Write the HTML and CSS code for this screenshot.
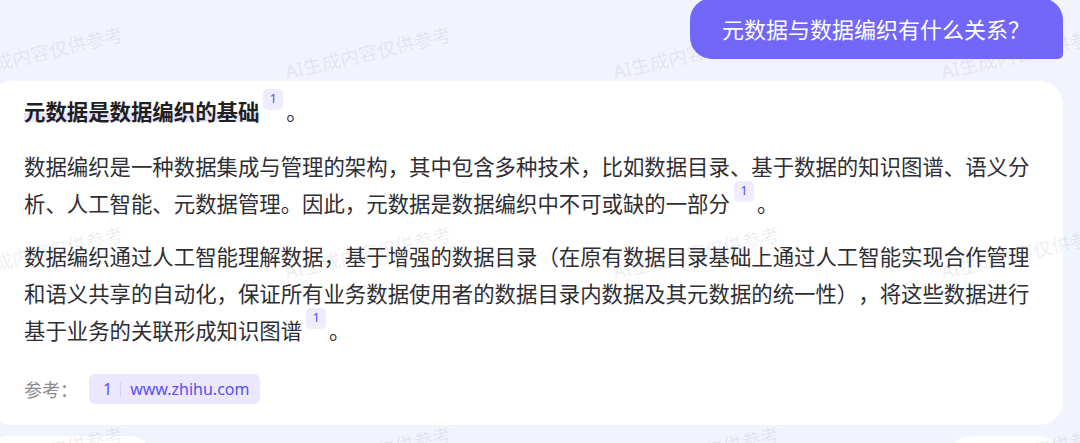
FILE: index.html
```html
<!DOCTYPE html>
<html lang="zh-CN">
<head>
    <meta charset="UTF-8">
    <meta name="viewport" content="width=device-width, initial-scale=1.0">
    <title>元数据与数据编织</title>
    <link rel="stylesheet" href="styles.css">
</head>
<body>
    <div class="page">
        <div class="chat">
            <div class="row-user">
                <div class="bubble-user">元数据与数据编织有什么关系？</div>
            </div>
            <div class="answer">
                <p class="answer-title"><strong class="mark">元数据是数据编织的基础</strong><sup class="cite">1</sup>。</p>
                <p>数据编织是一种数据集成与管理的架构，其中包含多种技术，比如数据目录、基于数据的知识图谱、语义分析、人工智能、元数据管理。因此，元数据是数据编织中不可或缺的一部分<sup class="cite">1</sup>。</p>
                <p>数据编织通过人工智能理解数据，基于增强的数据目录（在原有数据目录基础上通过人工智能实现合作管理和语义共享的自动化，保证所有业务数据使用者的数据目录内数据及其元数据的统一性），将这些数据进行基于业务的关联形成知识图谱<sup class="cite">1</sup>。</p>
                <div class="refs">
                    <span class="refs-label">参考：</span>
                    <a href="javascript:;" class="ref-chip"><span class="ref-num">1</span><span class="ref-sep"></span><span>www.zhihu.com</span></a>
                </div>
            </div>
            <div class="row-next">
                <div class="stub stub-left"></div>
                <div class="stub stub-right"></div>
            </div>
        </div>
        <!-- 水印 -->
        <div class="watermark">
            <div class="wm"><span>AI生成内容仅供参考</span></div>
            <div class="wm"><span>AI生成内容仅供参考</span></div>
            <div class="wm"><span>AI生成内容仅供参考</span></div>
            <div class="wm"><span>AI生成内容仅供参考</span></div>
            <div class="wm"><span>AI生成内容仅供参考</span></div>
            <div class="wm"><span>AI生成内容仅供参考</span></div>
            <div class="wm"><span>AI生成内容仅供参考</span></div>
            <div class="wm"><span>AI生成内容仅供参考</span></div>
            <div class="wm"><span>AI生成内容仅供参考</span></div>
            <div class="wm"><span>AI生成内容仅供参考</span></div>
            <div class="wm"><span>AI生成内容仅供参考</span></div>
            <div class="wm"><span>AI生成内容仅供参考</span></div>
        </div>
    </div>
</body>
</html>
```

FILE: styles.css
```css
*{padding:0;margin:0;box-sizing:border-box}
a{text-decoration:none}
body{
    background:#f1f4fd;
    font-family:"Noto Sans","Noto Sans CJK SC",sans-serif;
    color:#2e2e33;
    text-spacing-trim:space-all;
}
.page{
    position:relative;
    width:1080px;
    height:443px;
    overflow:hidden;
}
.chat{
    margin:0 17px 0 -12px;
    display:flex;
    flex-direction:column;
}
.row-user{
    display:flex;
    justify-content:flex-end;
    margin-top:-2px;
}
.bubble-user{
    height:61px;
    line-height:61px;
    padding:0 33px 0 32px;
    background:#7266fb;
    color:#fff;
    font-family:"Noto Sans CJK SC",sans-serif;
    font-size:22px;
    border-radius:22px 22px 5px 22px;
}
.answer{
    margin-top:22px;
    background:#fff;
    border-radius:24px;
    padding:11px 21px 21px 36px;
    font-family:"Noto Sans CJK SC",sans-serif;
    font-size:21.4px;
    line-height:37px;
}
.answer p{
    margin-bottom:16px;
}
.answer .answer-title{
    margin-bottom:18px;
}
.mark{
    font-weight:700;
    color:#1f1f24;
    background:linear-gradient(transparent 58%,rgba(114,102,251,0.16) 58%,rgba(114,102,251,0.16) 88%,transparent 88%);
}
.cite{
    display:inline-block;
    vertical-align:top;
    margin:-3px 3px 0 4px;
    width:20px;
    height:21px;
    line-height:19px;
    border-radius:5px;
    background:#eeecfe;
    color:#5b50f2;
    font-family:"Noto Sans",sans-serif;
    font-size:13px;
    text-align:center;
}
.refs{
    display:flex;
    align-items:center;
    margin-top:26px;
    line-height:30px;
}
.refs-label{
    color:#8b8b90;
    font-size:18px;
    width:65px;
}
.ref-chip{
    display:flex;
    align-items:center;
    height:30px;
    padding:0 11px 0 14px;
    border-radius:6px;
    background:#ebe8fe;
    color:#5a4ff0;
    font-family:"Noto Sans",sans-serif;
    font-size:16px;
}
.ref-sep{
    width:1px;
    height:14px;
    background:#d3cefb;
    margin:0 9px 0 8px;
}
.row-next{
    display:flex;
    justify-content:space-between;
    margin-top:11px;
}
.stub{
    height:40px;
    background:#fff;
    border-radius:20px;
}
.stub-left{
    width:162px;
}
.stub-right{
    width:108px;
    margin-right:5px;
}
.watermark{
    position:absolute;
    top:0;
    left:-40px;
    width:1312px;
    display:flex;
    flex-wrap:wrap;
    pointer-events:none;
}
.wm{
    width:328px;
    height:200px;
    padding-top:60px;
}
.wm span{
    display:inline-block;
    line-height:25px;
    font-family:"Noto Sans","Noto Sans CJK SC",sans-serif;
    font-size:19px;
    color:rgba(110,115,140,0.12);
    transform:rotate(-13deg);
    transform-origin:0 100%;
    white-space:nowrap;
}
```
